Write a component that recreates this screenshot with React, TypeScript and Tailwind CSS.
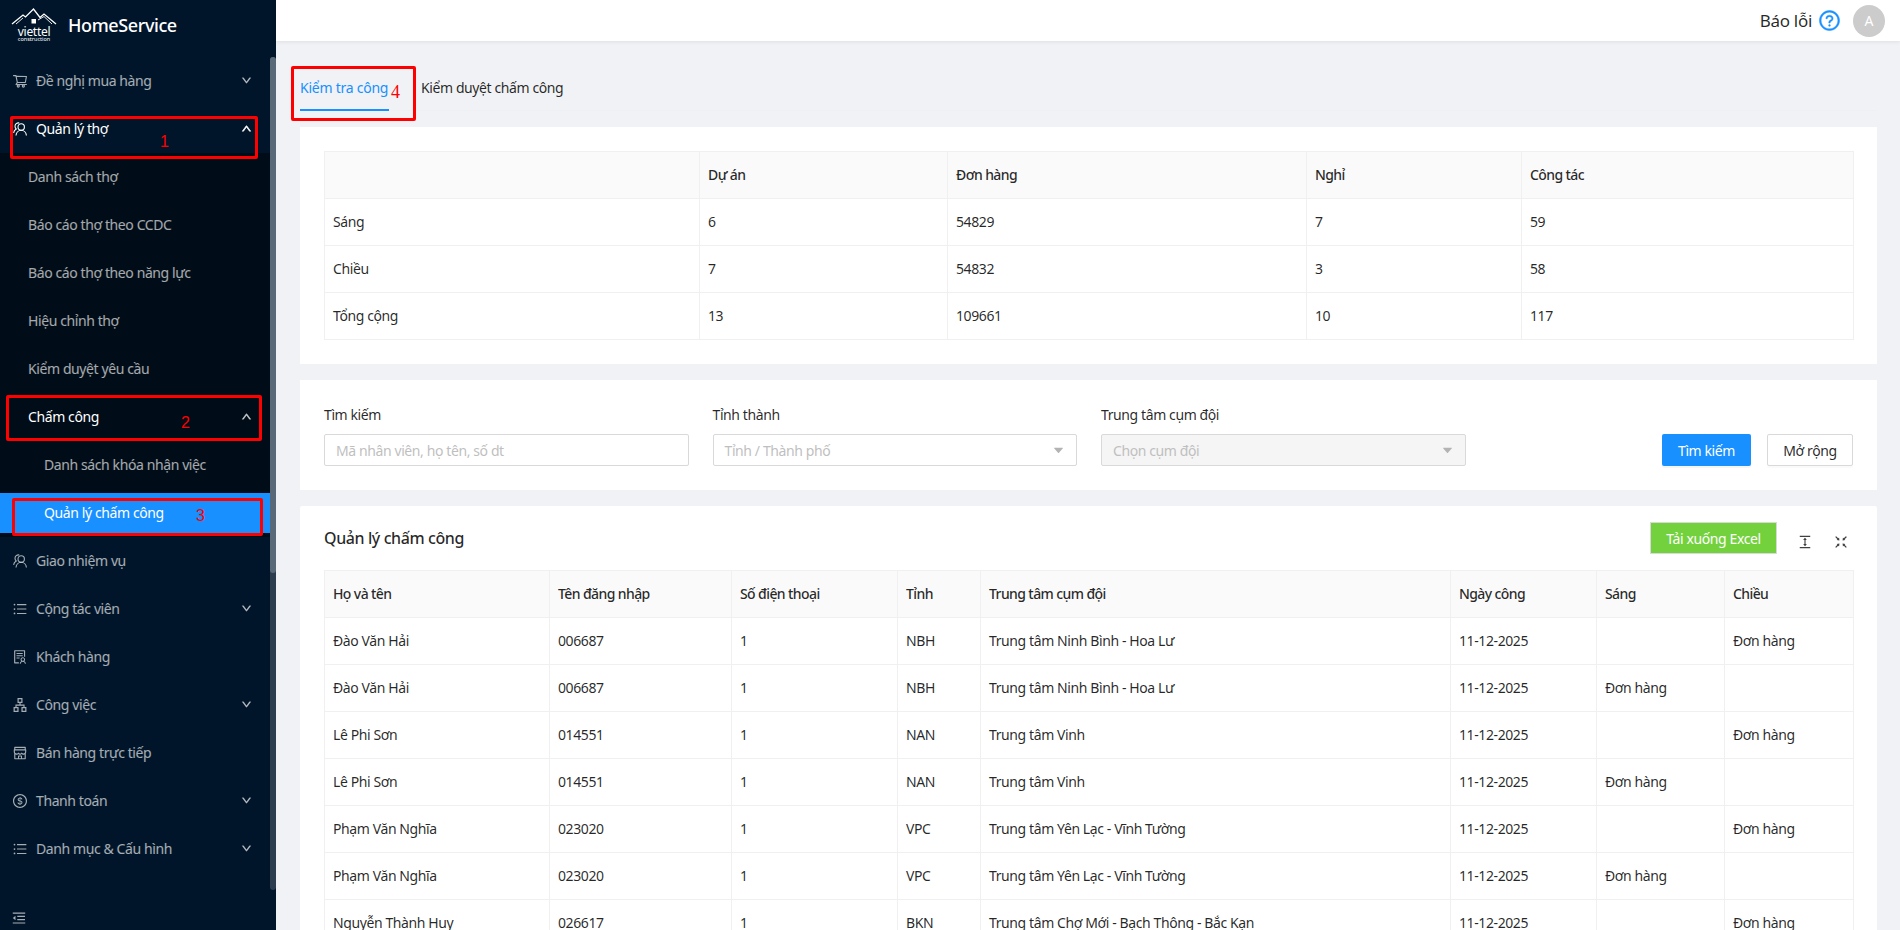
import type { ReactNode } from "react";
import {
  AiFillCaretDown,
  AiOutlineApartment,
  AiOutlineColumnHeight,
  AiOutlineDollarCircle,
  AiOutlineDown,
  AiOutlineFullscreenExit,
  AiOutlineMenuFold,
  AiOutlineQuestionCircle,
  AiOutlineShop,
  AiOutlineShoppingCart,
  AiOutlineSolution,
  AiOutlineUnorderedList,
  AiOutlineUp,
} from "react-icons/ai";

// Two overlapping people, not in any icon set
function PeopleIcon() {
  return (
    <svg width="14" height="14" viewBox="0 0 14 14" fill="none" stroke="currentColor" strokeWidth="1.1">
      <circle cx="8.2" cy="5" r="3.2" />
      <path d="M3 13.5c.2-3 2.4-5.2 5.2-5.2s5 2.2 5.2 5.2" />
      <path d="M6.2 .9C3.9 .5 2 2.2 2 4.3c0 1.1.5 2 1.2 2.7C1.700 7.800.8 9.300.6 10.900" />
    </svg>
  );
}

function Logo() {
  return (
    <div className="flex w-[46px] flex-col items-center text-white">
      <svg width="46" height="19" viewBox="0 0 46 19" fill="none" stroke="currentColor" strokeWidth="1.3">
        <path d="M1 17 L12 8 L14.5 10 L22.5 2 L29 10.5 L33 7 L45 17" />
        <path d="M5 17 L12 11 M27 13 L33 9.5 L41 17" strokeWidth="0.9" />
        <rect x="20.500" y="12" width="4.500" height="4.500" fill="currentColor" stroke="none" />
      </svg>
      <span className="mt-[1px] text-[12px] leading-[9px] tracking-[-0.3px]">viettel</span>
      <span className="text-[5.5px] leading-[6px]">construction</span>
    </div>
  );
}

type MenuEntry = {
  label: string;
  icon?: ReactNode;
  chevron?: "up" | "down";
  level?: 0 | 1 | 2;
  open?: boolean;
  selected?: boolean;
};

const listIcon = <AiOutlineUnorderedList size={16} className="shrink-0" />;

const menu: MenuEntry[] = [
  { label: "Đề nghị mua hàng", icon: <AiOutlineShoppingCart size={16} className="shrink-0" />, chevron: "down" },
  { label: "Quản lý thợ", icon: <PeopleIcon />, chevron: "up", open: true },
  { label: "Danh sách thợ", level: 1 },
  { label: "Báo cáo thợ theo CCDC", level: 1 },
  { label: "Báo cáo thợ theo năng lực", level: 1 },
  { label: "Hiệu chỉnh thợ", level: 1 },
  { label: "Kiểm duyệt yêu cầu", level: 1 },
  { label: "Chấm công", level: 1, chevron: "up", open: true },
  { label: "Danh sách khóa nhận việc", level: 2 },
  { label: "Quản lý chấm công", level: 2, selected: true },
  { label: "Giao nhiệm vụ", icon: <PeopleIcon /> },
  { label: "Cộng tác viên", icon: listIcon, chevron: "down" },
  { label: "Khách hàng", icon: <AiOutlineSolution size={16} className="shrink-0" /> },
  { label: "Công việc", icon: <AiOutlineApartment size={16} className="shrink-0" />, chevron: "down" },
  { label: "Bán hàng trực tiếp", icon: <AiOutlineShop size={16} className="shrink-0" /> },
  { label: "Thanh toán", icon: <AiOutlineDollarCircle size={16} className="shrink-0" />, chevron: "down" },
  { label: "Danh mục & Cấu hình", icon: listIcon, chevron: "down" },
];

function MenuRow({ item }: { item: MenuEntry }) {
  const level = item.level ?? 0;
  const text = item.selected || item.open ? "text-white" : "text-white/65";
  return (
    <div className={`flex h-12 items-center ${level > 0 ? "bg-[#000c17]" : ""}`}>
      <div
        className={`flex h-10 flex-1 items-center pr-[18px] ${text} ${item.selected ? "bg-[#1890ff]" : ""} ${
          level === 0 ? "pl-[13px]" : level === 1 ? "pl-[28px]" : "pl-[44px]"
        }`}
      >
        {item.icon && <span className="mr-[9px] flex w-[14px] justify-center">{item.icon}</span>}
        <span className="flex-1 pb-[2px] text-[14px] tracking-[-0.4px]">{item.label}</span>
        {item.chevron === "down" && (
          <AiOutlineDown size={11} stroke="currentColor" strokeWidth={50} className="mb-[2px] text-white/65" />
        )}
        {item.chevron === "up" && (
          <AiOutlineUp
            size={11}
            stroke="currentColor"
            strokeWidth={70}
            className={`mb-[2px] ${level === 0 ? "text-white" : "text-white/65"}`}
          />
        )}
      </div>
    </div>
  );
}

function Sidebar() {
  return (
    <aside className="flex h-full w-[276px] shrink-0 flex-col bg-[#001529]">
      <div className="flex h-[57px] shrink-0 items-start pt-[7px] pl-[11px]">
        <Logo />
        <span className="mt-[5px] ml-[11px] text-[18px] font-medium tracking-[-0.4px] text-white">HomeService</span>
      </div>
      <div className="flex flex-1">
        <nav className="w-[270px]">
          {menu.map((item) => (
            <MenuRow key={item.label} item={item} />
          ))}
        </nav>
        <div className="mb-[4px] flex w-[6px] flex-col rounded-[3px] bg-[#2c3d4f]">
          <div className="h-[516px] rounded-[3px] bg-[#5a6977]" />
        </div>
      </div>
      <div className="flex h-[36px] shrink-0 items-start bg-[#001529] pt-[16px] pl-[11px] text-white/65">
        <AiOutlineMenuFold size={16} />
      </div>
    </aside>
  );
}

function DataTable({ widths, head, rows }: { widths: number[]; head: string[]; rows: string[][] }) {
  return (
    <table className="w-full table-fixed border-separate border-spacing-0 border-t border-l border-[#f0f0f0] text-[14px] tracking-[-0.4px]">
      <colgroup>
        {widths.map((w, i) => (
          <col key={i} style={{ width: w }} />
        ))}
      </colgroup>
      <thead>
        <tr>
          {head.map((h, i) => (
            <th
              key={i}
              className="h-[47px] border-r border-b border-[#f0f0f0] bg-[#fafafa] px-2 pb-[2px] text-left font-medium tracking-[-0.6px] text-black/85"
            >
              {h}
            </th>
          ))}
        </tr>
      </thead>
      <tbody>
        {rows.map((row, r) => (
          <tr key={r}>
            {row.map((c, i) => (
              <td key={i} className="h-[47px] border-r border-b border-[#f0f0f0] px-2 pb-[2px] text-black/85">
                {c}
              </td>
            ))}
          </tr>
        ))}
      </tbody>
    </table>
  );
}

const summaryRows = [
  ["Sáng", "6", "54829", "7", "59"],
  ["Chiều", "7", "54832", "3", "58"],
  ["Tổng cộng", "13", "109661", "10", "117"],
];

const ninhBinh = "Trung tâm Ninh Bình - Hoa Lư";
const yenLac = "Trung tâm Yên Lạc - Vĩnh Tường";
const day = "11-12-2025";

const attendanceRows = [
  ["Đào Văn Hải", "006687", "1", "NBH", ninhBinh, day, "", "Đơn hàng"],
  ["Đào Văn Hải", "006687", "1", "NBH", ninhBinh, day, "Đơn hàng", ""],
  ["Lê Phi Sơn", "014551", "1", "NAN", "Trung tâm Vinh", day, "", "Đơn hàng"],
  ["Lê Phi Sơn", "014551", "1", "NAN", "Trung tâm Vinh", day, "Đơn hàng", ""],
  ["Phạm Văn Nghĩa", "023020", "1", "VPC", yenLac, day, "", "Đơn hàng"],
  ["Phạm Văn Nghĩa", "023020", "1", "VPC", yenLac, day, "Đơn hàng", ""],
  ["Nguyễn Thành Huy", "026617", "1", "BKN", "Trung tâm Chợ Mới - Bạch Thông - Bắc Kạn", day, "", "Đơn hàng"],
];

function SelectBox({ placeholder, disabled }: { placeholder: string; disabled?: boolean }) {
  return (
    <div
      className={`flex h-8 items-center justify-between rounded-[2px] border border-[#d9d9d9] px-[11px] text-[14px] tracking-[-0.4px] text-[#bfbfbf] ${
        disabled ? "bg-[#f5f5f5]" : "bg-white"
      }`}
    >
      <span>{placeholder}</span>
      <AiFillCaretDown size={13} className="text-[#b3b3b3]" />
    </div>
  );
}

function Field({ label, children }: { label: string; children: ReactNode }) {
  return (
    <div className="w-[364.5px]">
      <div className="mb-2 text-[14px] leading-[22px] tracking-[-0.4px] text-black/85">{label}</div>
      {children}
    </div>
  );
}

// Red marks drawn over the capture by whoever annotated it
const redBoxes = [
  "left-[10px] top-[116px] h-[43px] w-[248px]",
  "left-[6px] top-[395px] h-[46px] w-[256px]",
  "left-[12px] top-[498px] h-[38px] w-[251px]",
  "left-[291px] top-[66px] h-[55px] w-[125px]",
];

const redNumbers = [
  { n: "1", cls: "left-[160px] top-[131px] font-['Liberation_Sans',sans-serif] text-[16px]" },
  { n: "2", cls: "left-[181px] top-[412px] font-['Liberation_Sans',sans-serif] text-[16px]" },
  { n: "3", cls: "left-[196px] top-[505px] font-['Liberation_Sans',sans-serif] text-[16px]" },
  { n: "4", cls: "left-[391px] top-[81px] font-['Liberation_Serif',serif] text-[18px]" },
];

export default function App() {
  return (
    <div className="relative flex h-screen overflow-hidden bg-[#f0f2f5] font-['Noto_Sans',sans-serif]">
      <Sidebar />
      <main className="flex min-w-0 flex-1 flex-col">
        <header className="flex h-[41px] shrink-0 items-center justify-end bg-white pr-[15px] shadow-[0_1px_4px_rgba(0,21,41,0.08)]">
          <span className="text-[17px] tracking-[-0.3px] text-black/85">Báo lỗi</span>
          <AiOutlineQuestionCircle size={23} stroke="currentColor" strokeWidth={20} className="ml-[6px] text-[#1890ff]" />
          <span className="ml-[12px] flex h-8 w-8 items-center justify-center rounded-full bg-[#cccccc] text-[14px] text-white">
            A
          </span>
        </header>
        <div className="flex-1 overflow-hidden pr-[23px] pl-6">
          <div className="flex border-b border-[#eef0f4] pt-[36px] text-[14px] leading-[22px] tracking-[-0.4px]">
            <div className="mb-[-1px] w-[89px] border-b-2 border-[#1890ff] pb-[10px] tracking-[-0.25px] text-[#1890ff]">
              Kiểm tra công
            </div>
            <div className="ml-8 text-black/85">Kiểm duyệt chấm công</div>
          </div>

          <section className="mt-4 bg-white p-6">
            <DataTable
              widths={[375, 248, 359, 215, 332]}
              head={["", "Dự án", "Đơn hàng", "Nghỉ", "Công tác"]}
              rows={summaryRows}
            />
          </section>

          <section className="mt-4 flex items-end bg-white p-6">
            <div className="flex gap-6">
              <Field label="Tìm kiếm">
                <input
                  placeholder="Mã nhân viên, họ tên, số dt"
                  className="h-8 w-full rounded-[2px] border border-[#d9d9d9] px-[11px] text-[14px] tracking-[-0.4px] placeholder:text-[#bfbfbf]"
                />
              </Field>
              <Field label="Tỉnh thành">
                <SelectBox placeholder="Tỉnh / Thành phố" />
              </Field>
              <Field label="Trung tâm cụm đội">
                <SelectBox placeholder="Chọn cụm đội" disabled />
              </Field>
            </div>
            <div className="ml-auto flex gap-4">
              <button className="h-8 w-[89px] rounded-[2px] bg-[#1890ff] text-[14px] tracking-[-0.4px] text-white shadow-[0_2px_0_rgba(0,0,0,0.04)]">
                Tìm kiếm
              </button>
              <button className="h-8 w-[86px] rounded-[2px] border border-[#d9d9d9] bg-white text-[14px] tracking-[-0.4px] text-black/85 shadow-[0_2px_0_rgba(0,0,0,0.02)]">
                Mở rộng
              </button>
            </div>
          </section>

          <section className="mt-4 rounded-t-[2px] bg-white px-6 pt-4">
            <div className="mb-4 flex h-8 items-center">
              <h2 className="text-[16px] font-medium tracking-[-0.4px] text-black/85">Quản lý chấm công</h2>
              <button className="ml-auto h-8 w-[127px] border border-[#d9d9d9] bg-[#73d13d] text-[14px] tracking-[-0.4px] text-white">
                Tải xuống Excel
              </button>
              <AiOutlineColumnHeight size={16} className="mt-[8px] ml-[20px] text-black/75" />
              <AiOutlineFullscreenExit size={16} className="mt-[8px] ml-[20px] mr-[4px] text-black/75" />
            </div>
            <DataTable
              widths={[225, 182, 166, 83, 470, 146, 128, 129]}
              head={["Họ và tên", "Tên đăng nhập", "Số điện thoại", "Tỉnh", "Trung tâm cụm đội", "Ngày công", "Sáng", "Chiều"]}
              rows={attendanceRows}
            />
          </section>
        </div>
      </main>

      {redBoxes.map((cls) => (
        <div key={cls} className={`pointer-events-none absolute rounded-[2px] border-[3px] border-[#f00] ${cls}`} />
      ))}
      {redNumbers.map(({ n, cls }) => (
        <span key={n} className={`pointer-events-none absolute leading-[22px] text-[#f00] ${cls}`}>
          {n}
        </span>
      ))}
    </div>
  );
}
